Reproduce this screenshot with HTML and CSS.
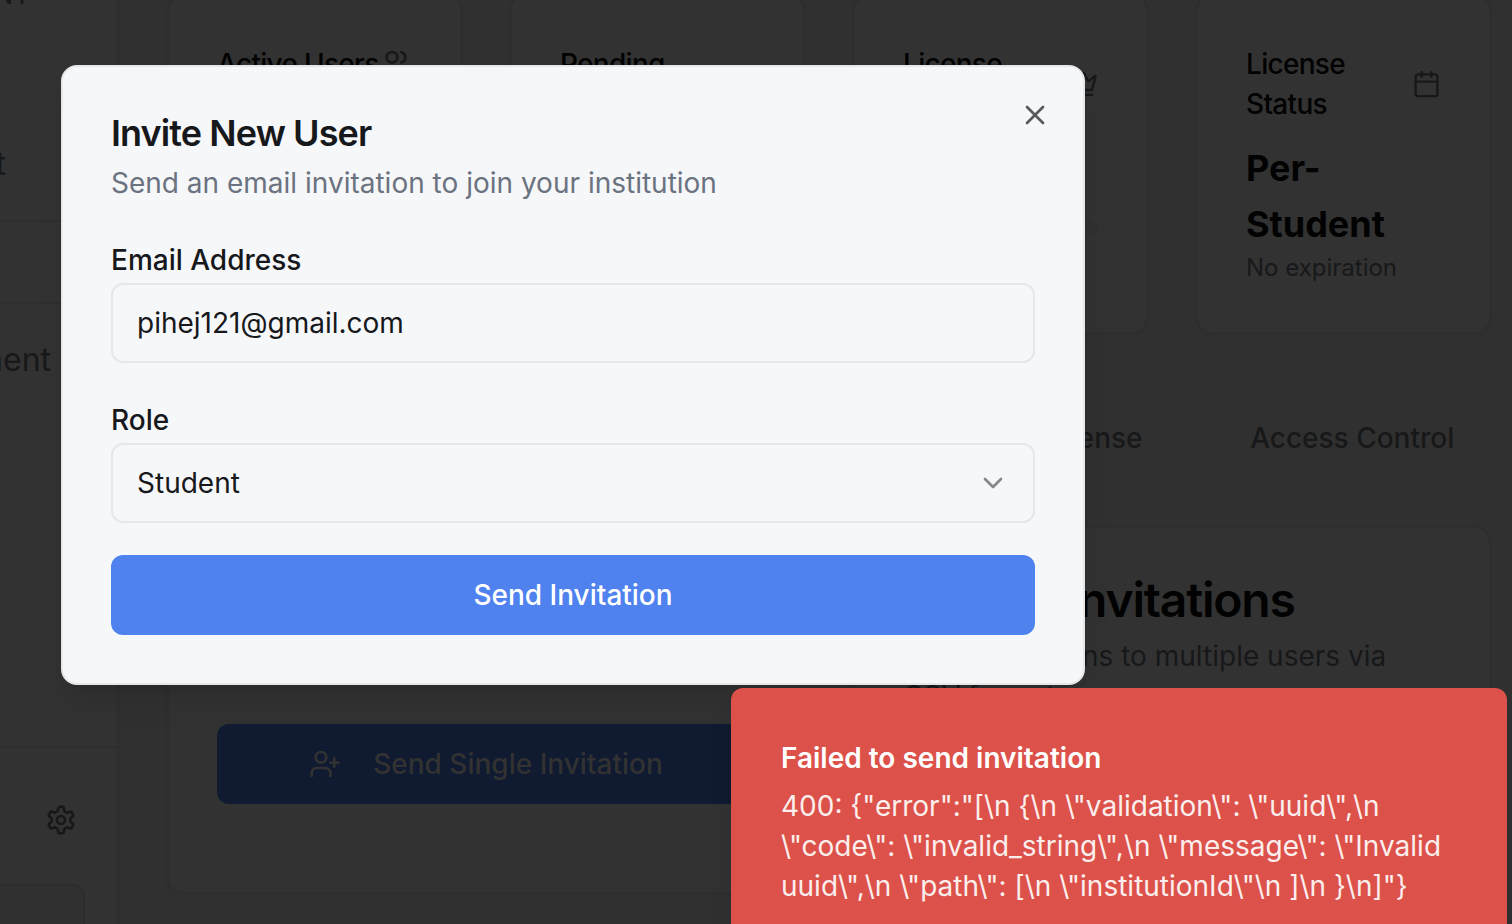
FILE: index.html
```html
<!DOCTYPE html>
<html lang="en">
<head>
<meta charset="utf-8">
<title>Invite New User</title>
<link rel="stylesheet" href="styles.css">
</head>
<body>
<div class="app">
  <aside class="sidebar">
    <div class="side-head"><span class="side-caps">MANAGEMENT</span><span class="side-item side-sub">Student</span></div>
    <div class="side-row"></div>
    <nav class="side-nav"><span class="side-item side-mgmt">Management</span></nav>
    <div class="side-foot">
      <svg class="icon gear" viewBox="0 0 24 24"><path d="M12.22 2h-.44a2 2 0 0 0-2 2v.18a2 2 0 0 1-1 1.73l-.43.25a2 2 0 0 1-2 0l-.15-.08a2 2 0 0 0-2.73.73l-.22.38a2 2 0 0 0 .73 2.73l.15.1a2 2 0 0 1 1 1.72v.51a2 2 0 0 1-1 1.74l-.15.09a2 2 0 0 0-.73 2.73l.22.38a2 2 0 0 0 2.73.73l.15-.08a2 2 0 0 1 2 0l.43.25a2 2 0 0 1 1 1.73V20a2 2 0 0 0 2 2h.44a2 2 0 0 0 2-2v-.18a2 2 0 0 1 1-1.73l.43-.25a2 2 0 0 1 2 0l.15.08a2 2 0 0 0 2.73-.73l.22-.39a2 2 0 0 0-.73-2.73l-.15-.08a2 2 0 0 1-1-1.74v-.5a2 2 0 0 1 1-1.74l.15-.09a2 2 0 0 0 .73-2.73l-.22-.38a2 2 0 0 0-2.73-.73l-.15.08a2 2 0 0 1-2 0l-.43-.25a2 2 0 0 1-1-1.73V4a2 2 0 0 0-2-2z"/><circle cx="12" cy="12" r="3"/></svg>
      <div class="side-box"></div>
    </div>
  </aside>
  <main class="main">
    <section class="stats">
      <article class="card stat">
        <header class="stat-head"><h3>Active Users</h3><svg class="icon" viewBox="0 0 24 24"><path d="M16 21v-2a4 4 0 0 0-4-4H6a4 4 0 0 0-4 4v2"/><circle cx="9" cy="7" r="4"/><path d="M22 21v-2a4 4 0 0 0-3-3.87"/><path d="M16 3.13a4 4 0 0 1 0 7.75"/></svg></header>
      </article>
      <article class="card stat">
        <header class="stat-head"><h3>Pending<br>Invitations</h3></header>
      </article>
      <article class="card stat">
        <header class="stat-head"><h3>License<br>Usage</h3><svg class="icon icon-fit" viewBox="0 0 24 24"><path d="M11.562 3.266a.5.5 0 0 1 .876 0L15.39 8.87a1 1 0 0 0 1.516.294L21.183 5.5a.5.5 0 0 1 .798.519l-2.834 10.246a1 1 0 0 1-.956.734H5.81a1 1 0 0 1-.957-.734L2.02 6.02a.5.5 0 0 1 .798-.519l4.276 3.664a1 1 0 0 0 1.516-.294z"/><path d="M5 21h14"/></svg></header>
        <div class="meter"></div>
      </article>
      <article class="card stat">
        <header class="stat-head"><h3>License<br>Status</h3><svg class="icon icon-fit" viewBox="0 0 24 24"><path d="M8 2v4"/><path d="M16 2v4"/><rect width="18" height="18" x="3" y="4" rx="2"/><path d="M3 10h18"/></svg></header>
        <p class="stat-value">Per-<br>Student</p>
        <p class="stat-note">No expiration</p>
      </article>
    </section>
    <nav class="tabs"><span></span><span></span><span></span><span class="tab">License</span><span class="tab">Access Control</span></nav>
    <section class="panels">
      <article class="card panel">
        <div class="panel-space"></div>
        <div class="btn btn-dim"><svg class="icon" viewBox="0 0 24 24"><path d="M16 21v-2a4 4 0 0 0-4-4H6a4 4 0 0 0-4 4v2"/><circle cx="9" cy="7" r="4"/><path d="M19 8v6"/><path d="M22 11h-6"/></svg><span>Send Single Invitation</span></div>
      </article>
      <article class="card panel">
        <h2 class="panel-title"><svg class="icon icon-lg" viewBox="0 0 24 24"><path d="M21 15v4a2 2 0 0 1-2 2H5a2 2 0 0 1-2-2v-4"/><path d="m17 8-5-5-5 5"/><path d="M12 3v12"/></svg><span>Bulk Invitations</span></h2>
        <p class="panel-text">Send invitations to multiple users via<br>CSV format</p>
      </article>
    </section>
  </main>
</div>

<div class="modal" role="dialog">
  <svg class="icon close" viewBox="0 0 24 24"><path d="M18 6 6 18"/><path d="m6 6 12 12"/></svg>
  <h2 class="modal-title">Invite New User</h2>
  <p class="modal-text">Send an email invitation to join your institution</p>
  <form class="form">
    <div class="field"><span class="label">Email Address</span><div class="control"><span>pihej121@gmail.com</span></div></div>
    <div class="field"><span class="label">Role</span><div class="control"><span>Student</span><svg class="icon chev" viewBox="0 0 24 24"><path d="m6 9 6 6 6-6"/></svg></div></div>
    <div class="btn btn-main"><span>Send Invitation</span></div>
  </form>
</div>

<div class="toast" role="alert">
  <p class="toast-title"><span>Failed to send invitation</span></p>
  <p class="toast-text">400: {"error":"[\n {\n \"validation\": \"uuid\",\n<br>\"code\": \"invalid_string\",\n \"message\": \"Invalid<br>uuid\",\n \"path\": [\n \"institutionId\"\n ]\n }\n]"}</p>
</div>
</body>
</html>
```
FILE: styles.css
```css
* { box-sizing: border-box; margin: 0; }
body {
  width: 1512px; height: 924px; overflow: hidden; position: relative;
  background: #303030; color: #020202;
  font: 400 28px/40px Inter, "Liberation Sans", sans-serif;
}
.icon { width: 32px; height: 32px; flex: none; fill: none; stroke: currentColor; stroke-width: 2; stroke-linecap: round; stroke-linejoin: round; }
.icon-fit { width: 29px; }
.icon-lg { width: 40px; height: 40px; }

.app { display: flex; height: 924px; overflow: hidden; }
.sidebar { width: 119px; flex: none; display: flex; flex-direction: column; background: #323232; border-right: 2px solid #2e2e2e; color: #17181a; overflow: hidden; }
.side-head { height: 222px; border-bottom: 2px solid #2e2e2e; display: flex; flex-direction: column; align-items: flex-start; justify-content: space-between; padding-bottom: 32px; }
.side-caps { align-self: flex-end; margin: -24px 86px 0 0; font-size: 24px; font-weight: 500; letter-spacing: 0.05em; white-space: nowrap; }
.side-item { align-self: flex-end; font-size: 32px; line-height: 48px; white-space: nowrap; }
.side-sub { margin-right: 111px; }
.side-row { height: 82px; border-bottom: 2px solid #2e2e2e; }
.side-nav { height: 444px; border-bottom: 2px solid #2e2e2e; padding-top: 32px; display: flex; flex-direction: column; }
.side-mgmt { margin-right: 66px; }
.side-foot { flex: 1; padding-top: 56px; display: flex; flex-direction: column; }
.gear { margin-left: 45px; }
.side-box { width: 85px; flex: 1; margin-top: 48px; background: #303030; border: 2px solid #2d2d2d; border-width: 2px 2px 0 0; border-top-right-radius: 12px; }

.main { flex: 1; padding: 0 21px 0 48px; margin-top: -6px; }
.card { min-width: 0; background: #323232; border: 2px solid #2e2e2e; border-radius: 16px; padding: 48px; box-shadow: 0 2px 4px rgba(0,0,0,.02); }
.stats { display: grid; grid-template-columns: repeat(4, minmax(0, 1fr)); gap: 48px; height: 340px; }
.stat-head { display: flex; justify-content: space-between; align-items: center; padding-bottom: 16px; }
.stat-head h3 { font-size: 28px; font-weight: 500; line-height: 40px; letter-spacing: -0.025em; white-space: nowrap; }
.stat-head .icon { color: #17181a; }
.stat-value { font-size: 36px; line-height: 56px; font-weight: 700; }
.stat-note { font-size: 24px; line-height: 32px; color: #17181a; }
.meter { height: 16px; margin-top: 80px; border-radius: 8px; background: #303030; }
.tabs { display: grid; grid-template-columns: repeat(5, 1fr); align-items: center; height: 80px; margin-top: 64px; padding: 0 8px; color: #17181a; }
.tab { text-align: center; font-weight: 500; white-space: nowrap; }
.panels { display: grid; grid-template-columns: repeat(2, minmax(0, 1fr)); gap: 48px; margin-top: 48px; height: 368px; }
.panel-space { height: 148px; }
.panel-title { display: flex; align-items: center; gap: 16px; font-size: 48px; line-height: 48px; font-weight: 600; letter-spacing: -0.025em; white-space: nowrap; }
.panel-text { margin-top: 12px; color: #17181a; white-space: nowrap; }

.btn { height: 80px; display: flex; align-items: center; justify-content: center; gap: 32px; border-radius: 12px; font-weight: 500; white-space: nowrap; }
.btn-dim { background: #101a30; color: #323232; }
.btn-main { background: #4f82ee; color: #fff; }

.modal { position: absolute; left: 61px; top: 65px; width: 1024px; height: 620px; padding: 48px; background: #f6f7f9; color: #16181b; border: 2px solid #e5e7e9; border-radius: 16px; box-shadow: 0 20px 30px -6px rgba(0,0,0,.1), 0 8px 12px -8px rgba(0,0,0,.1); }
.close { position: absolute; right: 32px; top: 32px; color: #58595b; }
.modal-title { font-size: 36px; line-height: 36px; font-weight: 600; letter-spacing: -0.025em; }
.modal-text { margin-top: 12px; color: #6b7280; }
.form { display: flex; flex-direction: column; gap: 32px; margin-top: 32px; }
.label { display: block; height: 48px; padding-top: 1px; line-height: 48px; font-weight: 500; }
.control { height: 80px; display: flex; align-items: center; justify-content: space-between; padding: 0 24px; border: 2px solid #e5e7e9; border-radius: 12px; }
.chev { color: #868789; }

.toast { position: absolute; left: 731px; top: 688px; width: 776px; height: 236px; padding: 50px 50px 0; background: #dc5149; color: #fff; border-radius: 12px 12px 0 0; box-shadow: 0 20px 30px -6px rgba(0,0,0,.1); }
.toast-title { font-weight: 600; }
.toast-text { margin-top: 8px; color: #fbeeed; white-space: nowrap; }
```
